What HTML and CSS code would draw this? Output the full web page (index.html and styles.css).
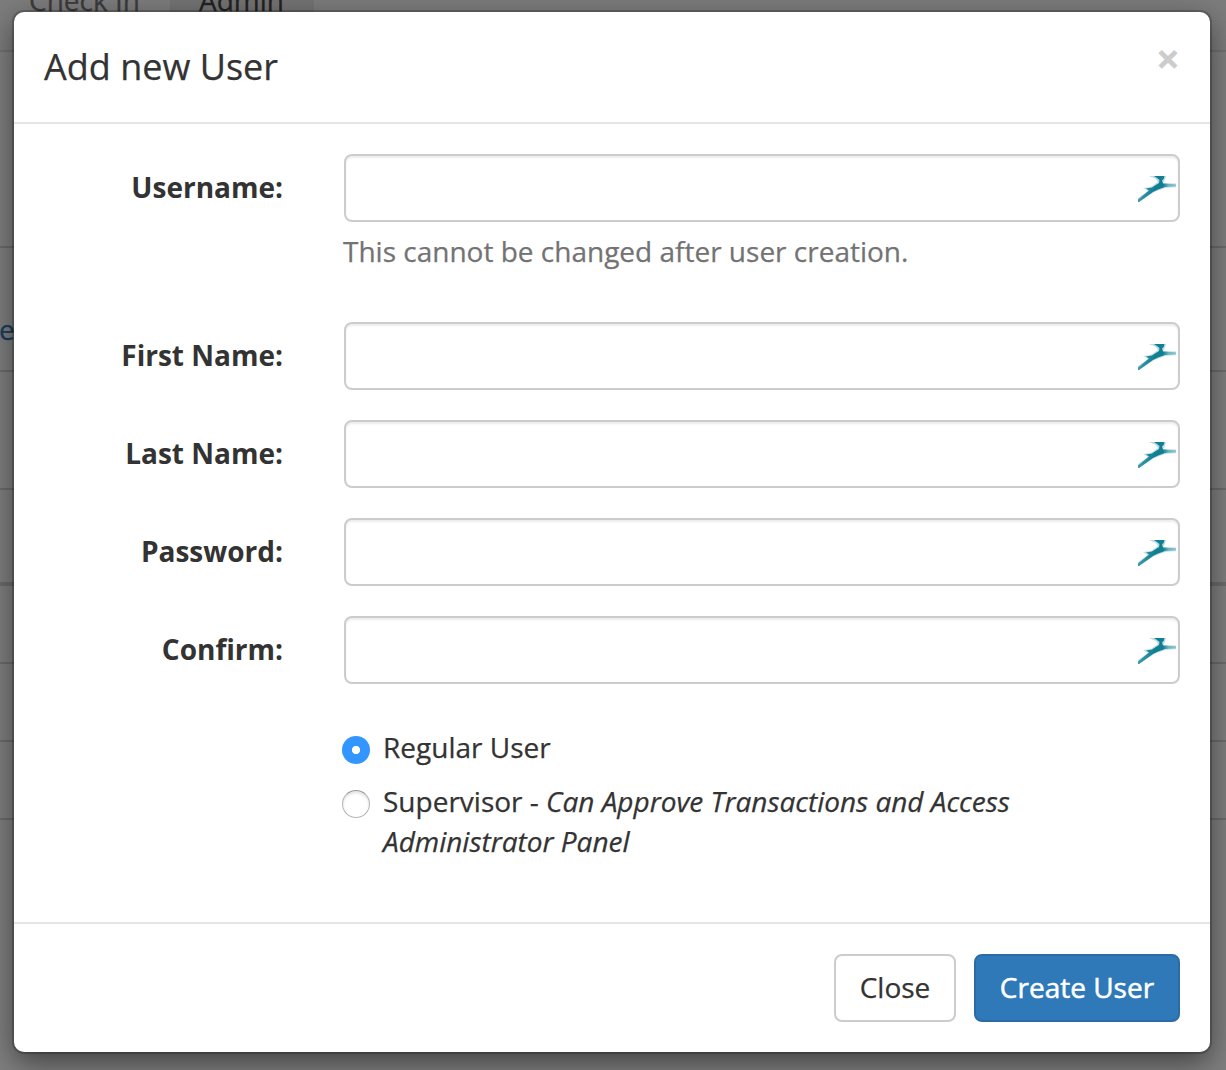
FILE: index.html
```html
<!DOCTYPE html>
<html lang="en">
<head>
<meta charset="utf-8">
<title>Add new User</title>
<link rel="stylesheet" href="styles.css">
</head>
<body>
<svg width="0" height="0" class="defs" aria-hidden="true">
  <defs>
    <linearGradient id="wing" gradientUnits="userSpaceOnUse" x1="0" y1="0" x2="38" y2="0">
      <stop offset="0" stop-color="#3d9ba9"/>
      <stop offset=".25" stop-color="#238a9b"/>
      <stop offset=".45" stop-color="#107f93"/>
      <stop offset=".66" stop-color="#107f93"/>
      <stop offset=".8" stop-color="#6db4bf"/>
      <stop offset="1" stop-color="#8cc4cc"/>
    </linearGradient>
    <symbol id="bird" viewBox="0 0 38 27">
      <path fill="url(#wing)" opacity=".3" d="M11 1H28L27 5 25 8 38 8V12.500L27 13 16 17 1 27H0V23L10 16 5 13 13 12 20 7 18 4Z"/>
      <path fill="url(#wing)" d="M16 1H26.500L26 3.500 24 5.500 25 8.500 38 9.300V11.500L27 12 20 14.500 15 17 1 27H0V24.500L11 15.500 8 13.500 14 12.500 21 8 21.500 5 19 3Z"/>
    </symbol>
  </defs>
</svg>
<div class="page">
  <nav class="navbar"><span class="nav-item">Check In</span><span class="nav-item active">Admin</span></nav>
  <div class="row first"></div>
  <div class="row link-row"><a class="link">e</a></div>
  <div class="row medium"></div>
  <div class="row thick"></div>
  <div class="row small"></div>
  <div class="row small"></div>
  <div class="row small"></div>
</div>
<div class="backdrop">
  <section class="modal">
    <header class="modal-header">
      <h4 class="title">Add new User</h4>
      <span class="dismiss">×</span>
    </header>
    <form class="modal-body">
      <div class="field">
        <label class="label">Username:</label>
        <div class="control">
          <div class="input"><svg class="bird"><use href="#bird"/></svg></div>
          <p class="help">This cannot be changed after user creation.</p>
        </div>
      </div>
      <div class="field"><label class="label">First Name:</label><div class="input"><svg class="bird"><use href="#bird"/></svg></div></div>
      <div class="field"><label class="label">Last Name:</label><div class="input"><svg class="bird"><use href="#bird"/></svg></div></div>
      <div class="field"><label class="label">Password:</label><div class="input"><svg class="bird"><use href="#bird"/></svg></div></div>
      <div class="field"><label class="label">Confirm:</label><div class="input"><svg class="bird"><use href="#bird"/></svg></div></div>
      <div class="choices">
        <label class="choice"><span class="radio checked"></span><span class="choice-text">Regular User</span></label>
        <label class="choice"><span class="radio"></span><span class="choice-text">Supervisor - <em>Can Approve Transactions and Access<br>Administrator Panel</em></span></label>
      </div>
    </form>
    <footer class="modal-footer">
      <button class="btn" type="button">Close</button>
      <button class="btn primary" type="button">Create User</button>
    </footer>
  </section>
</div>
</body>
</html>
```
FILE: styles.css
```css
* { box-sizing: border-box; }
body {
  margin: 0;
  height: 1070px;
  overflow: hidden;
  font: 28px/40px "Open Sans", "Noto Sans", sans-serif;
  color: #333;
  background: #fff;
  -webkit-text-stroke: .25px currentColor;
}
.defs { position: absolute; }

.page { height: 1070px; overflow: hidden; }
.navbar {
  display: flex;
  height: 52px;
  background: #f8f8f8;
  border-bottom: 2px solid #e2e2e2;
}
.nav-item {
  height: 50px;
  padding: 0 30px;
  line-height: 0;
  text-indent: -1px;
  color: #777;
}
.nav-item.active { background: #e7e7e7; color: #444; }
.row { border-bottom: 2px solid #d9d9d9; }
.row.first { height: 196px; }
.row.link-row { height: 124px; padding-top: 61px; }
.row.medium { height: 118px; }
.row.thick { height: 96px; border-bottom-width: 4px; }
.row.small { height: 78px; }
.link { color: #337ab7; margin-left: -1px; }

.backdrop {
  position: absolute;
  inset: 0;
  padding: 12px 16px 18px 14px;
  background: rgba(0, 0, 0, .5);
}
.modal {
  display: flex;
  flex-direction: column;
  height: 1040px;
  background: #fff;
  border-radius: 10px;
  box-shadow: 0 0 0 2px rgba(0, 0, 0, .2), 0 10px 30px rgba(0, 0, 0, .5);
}
.modal-header {
  display: flex;
  justify-content: space-between;
  height: 112px;
  padding: 29px 30px 0;
  border-bottom: 2px solid #e5e5e5;
}
.title { margin: 0; font-size: 36px; font-weight: 400; line-height: 51px; }
.dismiss { font-size: 42px; font-weight: 700; line-height: 42px; color: #ccc; margin-top: -4px; }
.modal-body { height: 798px; padding: 30px; }
.field {
  display: grid;
  grid-template-columns: 239px 836px;
  justify-content: space-between;
  margin-bottom: 30px;
}
.label { padding-top: 13px; font-weight: 700; text-align: right; -webkit-text-stroke: 0; }
.input {
  display: flex;
  justify-content: flex-end;
  height: 68px;
  padding: 19px 2px 0;
  border: 2px solid #ccc;
  border-radius: 8px;
  box-shadow: inset 0 2px 2px rgba(0, 0, 0, .075);
}
.bird { width: 38px; height: 27px; filter: blur(.5px); }
.help { margin: 9px 0 21px -1px; color: #737373; }
.choices { padding: 13px 0 0 298px; }
.choice { display: flex; gap: 13px; margin-bottom: 14px; }
.radio {
  flex: none;
  width: 28px;
  height: 28px;
  margin: 9px 0 0;
  border: 1px solid #b4b4b4;
  border-top-color: #999;
  border-radius: 50%;
  box-shadow: inset 0 2px 3px rgba(0, 0, 0, .12);
}
.radio.checked {
  border: 0;
  background: radial-gradient(circle, #fff 3.7px, #3395ff 4.5px);
  box-shadow: none;
}
.choice em { letter-spacing: -.02px; }
.modal-footer {
  display: flex;
  justify-content: flex-end;
  gap: 18px;
  height: 130px;
  padding: 30px;
  border-top: 2px solid #e5e5e5;
}
.btn {
  width: 122px;
  height: 68px;
  padding: 0 0 2px;
  font: inherit;
  color: #333;
  background: #fff;
  border: 2px solid #ccc;
  border-radius: 8px;
}
.btn.primary {
  width: 206px;
  color: #fff;
  background: #2f79b9;
  border-color: #2b6ca6;
  -webkit-text-stroke: .5px #fff;
}
```
